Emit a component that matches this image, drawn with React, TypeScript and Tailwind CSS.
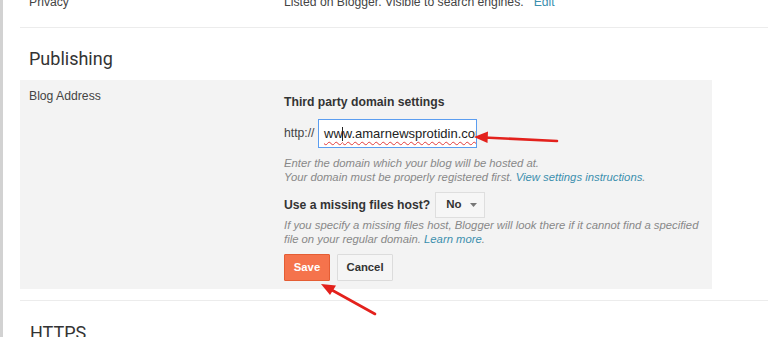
import React from "react";

export default function App() {
  return (
    <div className="relative w-[768px] h-[337px] overflow-hidden bg-white flex font-['Liberation_Sans',Arial,sans-serif]">
      <div className="w-[3px] shrink-0 bg-[#d2d2d2]" />
      <div className="flex-1 pl-[17px] flex flex-col">
        {/* Privacy row */}
        <div className="shrink-0 h-[28px] border-b border-[#ececec] flex items-start pl-[9px]">
          <div className="-mt-[6px] w-[255px] text-[12.2px] leading-[16px] text-[#444]">Privacy</div>
          <div className="-mt-[6px] text-[12.2px] leading-[16px] text-[#444]">
            Listed on Blogger. Visible to search engines.
            <span className="ml-[10px] text-[#3b8fae]">Edit</span>
          </div>
        </div>

        {/* Publishing heading */}
        <div className="shrink-0 pt-[19px] pl-[9px] h-[52px] font-['Roboto',sans-serif] text-[18px] leading-[24px] text-[#333]">
          Publishing
        </div>

        {/* Panel */}
        <div className="shrink-0 w-[692px] bg-[#f3f3f3] flex pl-[9px] pt-[8px] pb-[8px]">
          <div className="w-[255px] shrink-0 text-[12.2px] leading-[16px] text-[#444]">Blog Address</div>
          <div className="flex flex-col mt-[6px]">
            <div className="font-bold text-[12.2px] leading-[16px] text-[#333]">Third party domain settings</div>
            <div className="mt-[9px] flex items-center">
              <span className="text-[12.2px] text-[#444] w-[34px]">http://</span>
              <div className="w-[159px] h-[29px] border border-[#5b9df0] bg-white pl-[5px] flex items-center overflow-hidden">
                <span className="whitespace-nowrap text-[13px] text-[#222] underline decoration-wavy decoration-[#e23b3b] decoration-[1px] underline-offset-[3px]">
                  ww<span className="inline-block w-[1px] h-[14px] bg-[#222] align-middle -mx-[0.5px]" />w.amarnewsprotidin.com
                </span>
              </div>
            </div>
            <div className="mt-[8px] italic text-[11.3px] leading-[14px] text-[#888]">
              <div>Enter the domain which your blog will be hosted at.</div>
              <div>
                Your domain must be properly registered first.{" "}
                <span className="text-[#3b8fae]">View settings instructions</span>.
              </div>
            </div>
            <div className="mt-[8px] flex items-center">
              <span className="font-bold text-[12.2px] text-[#333]">Use a missing files host?</span>
              <div className="ml-[5px] w-[50px] h-[26px] bg-[#f6f6f6] border border-[#dedede] flex items-center pl-[10px] gap-[8px]">
                <span className="font-bold text-[11.5px] text-[#333]">No</span>
                <svg width="7" height="4" viewBox="0 0 7 4">
                  <path d="M0 0 L7 0 L3.5 4 Z" fill="#777" />
                </svg>
              </div>
            </div>
            <div className="italic text-[11.3px] leading-[14px] text-[#888]">
              <div>If you specify a missing files host, Blogger will look there if it cannot find a specified</div>
              <div>
                file on your regular domain. <span className="text-[#3b8fae]">Learn more</span>.
              </div>
            </div>
            <div className="mt-[8px] flex gap-[7px]">
              <div className="w-[46px] h-[27px] bg-[#f5734c] border border-[#e45d34] rounded-[1px] flex items-center justify-center text-white font-bold text-[11.3px]">
                Save
              </div>
              <div className="w-[56px] h-[27px] bg-[#f5f5f5] border border-[#dcdcdc] rounded-[1px] flex items-center justify-center text-[#333] font-bold text-[11.3px]">
                Cancel
              </div>
            </div>
          </div>
        </div>

        <div className="shrink-0 mt-[11px] border-t border-[#ececec]" />
        <div className="shrink-0 pt-[20px] pl-[10px] font-['Roboto',sans-serif] text-[18px] leading-[24px] text-[#333]">HTTPS</div>
      </div>

      {/* Red arrows overlay */}
      <svg className="absolute left-0 top-0 pointer-events-none" width="768" height="337" viewBox="0 0 768 337">
        <line x1="557" y1="141" x2="484" y2="137.5" stroke="#e3211c" strokeWidth="2.6" strokeLinecap="round" />
        <path d="M474 137 L488 131.5 L487.5 143 Z" fill="#e3211c" />
        <line x1="375" y1="314" x2="330" y2="289" stroke="#e3211c" strokeWidth="2.6" strokeLinecap="round" />
        <path d="M321 284 L336 285.5 L330 295 Z" fill="#e3211c" />
      </svg>
    </div>
  );
}
